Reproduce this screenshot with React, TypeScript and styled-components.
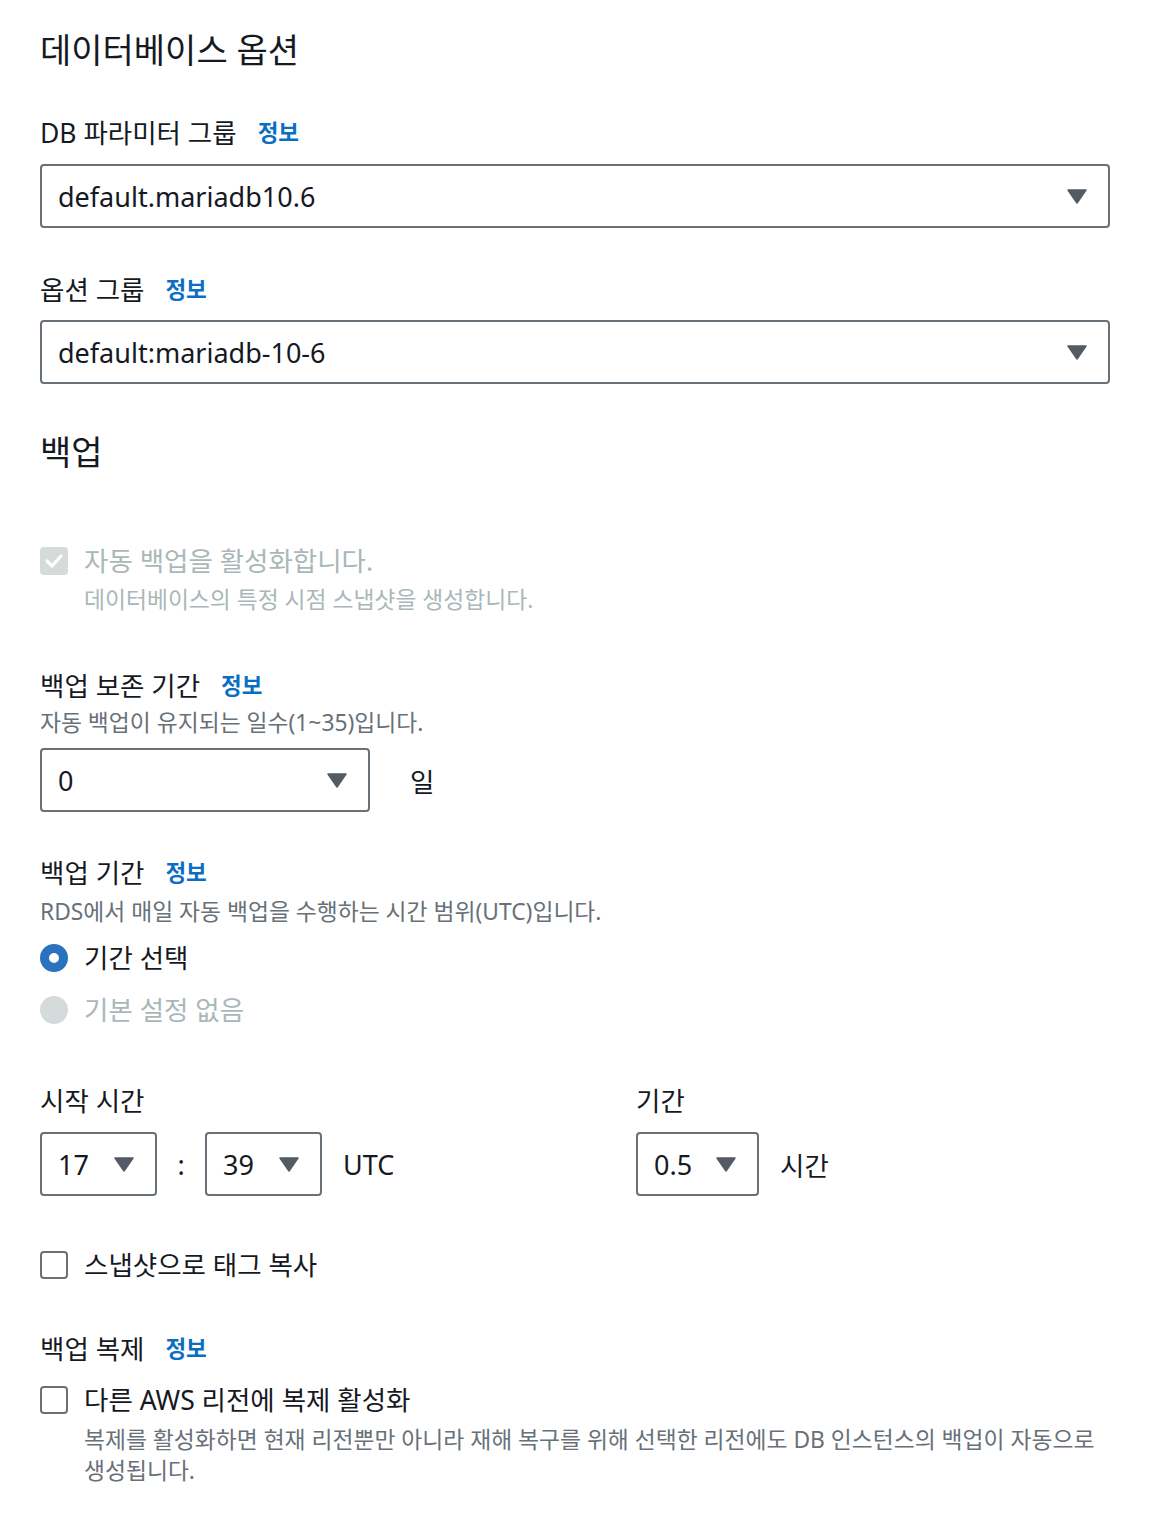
import React from "react";
import styled, { createGlobalStyle } from "styled-components";

const Global = createGlobalStyle`
  html, body { margin: 0; padding: 0; background: #ffffff; }
  body { font-family: "Noto Sans", "Noto Sans CJK KR", sans-serif; color: #16191f; }
`;

const Page = styled.div`
  width: 1070px;
  padding: 30px 0 40px 40px;
`;

const Heading = styled.h2<{ $mt?: number }>`
  margin: ${(p) => p.$mt ?? 0}px 0 0 0;
  font-size: 34px;
  line-height: 40px;
  font-weight: 400;
  color: #16191f;
`;

const Label = styled.div<{ $mt: number }>`
  margin-top: ${(p) => p.$mt}px;
  display: flex;
  align-items: center;
  gap: 21px;
  font-size: 26.5px;
  line-height: 32px;
  color: #16191f;
`;

const Info = styled.span`
  color: #0a6fc2;
  font-weight: 700;
  font-size: 22.5px;
`;

const Desc = styled.div<{ $mt: number; $indent?: boolean; $disabled?: boolean }>`
  margin-top: ${(p) => p.$mt}px;
  padding-left: ${(p) => (p.$indent ? 44 : 0)}px;
  font-size: 22.8px;
  line-height: 31px;
  color: ${(p) => (p.$disabled ? "#aab7b8" : "#687078")};
`;

const SelectBox = styled.div<{ $w?: number; $mt?: number }>`
  margin-top: ${(p) => p.$mt ?? 0}px;
  box-sizing: border-box;
  width: ${(p) => (p.$w ? `${p.$w}px` : "100%")};
  height: 64px;
  border: 2px solid #687078;
  border-radius: 4px;
  display: flex;
  align-items: center;
  justify-content: space-between;
  padding: 0 21px 0 16px;
  font-size: 27px;
  color: #16191f;
  flex-shrink: 0;
`;

const Caret = () => (
  <svg width="20" height="15" viewBox="0 0 20 15">
    <path d="M1 1 H19 L10 14 Z" fill="#545b64" stroke="#545b64" strokeWidth="1.5" strokeLinejoin="round" />
  </svg>
);

const Select = ({ value, w, mt }: { value: string; w?: number; mt?: number }) => (
  <SelectBox $w={w} $mt={mt}>
    <span>{value}</span>
    <Caret />
  </SelectBox>
);

const InlineRow = styled.div<{ $mt?: number }>`
  margin-top: ${(p) => p.$mt ?? 0}px;
  display: flex;
  align-items: center;
`;

const Unit = styled.span<{ $ml: number; $latin?: boolean }>`
  margin-left: ${(p) => p.$ml}px;
  font-size: ${(p) => (p.$latin ? 27 : 26.5)}px;
  color: #16191f;
`;

const Colon = styled.span`
  width: 48px;
  text-align: center;
  font-size: 27px;
`;

const ChoiceRow = styled.div<{ $mt: number; $disabled?: boolean }>`
  margin-top: ${(p) => p.$mt}px;
  display: flex;
  align-items: center;
  gap: 16px;
  font-size: 26.5px;
  line-height: 32px;
  color: ${(p) => (p.$disabled ? "#aab7b8" : "#16191f")};
`;

const Box = styled.span<{ $disabled?: boolean }>`
  box-sizing: border-box;
  width: 28px;
  height: 28px;
  border-radius: 4px;
  flex-shrink: 0;
  display: flex;
  align-items: center;
  justify-content: center;
  border: ${(p) => (p.$disabled ? "none" : "2px solid #687078")};
  background: ${(p) => (p.$disabled ? "#d5dbdb" : "#ffffff")};
`;

const Radio = styled.span<{ $checked?: boolean }>`
  box-sizing: border-box;
  width: 28px;
  height: 28px;
  border-radius: 50%;
  flex-shrink: 0;
  background: ${(p) => (p.$checked ? "#ffffff" : "#d5dbdb")};
  border: ${(p) => (p.$checked ? "9px solid #2a72bd" : "none")};
`;

const Grid = styled.div`
  margin-top: 59px;
  display: grid;
  grid-template-columns: 596px 1fr;
`;

const Col = styled.div``;

const Check = () => (
  <svg width="20" height="16" viewBox="0 0 20 16">
    <path d="M3 8 L8 13 L17 3" fill="none" stroke="#ffffff" strokeWidth="3.2" strokeLinecap="round" strokeLinejoin="round" />
  </svg>
);

export default function App() {
  return (
    <Page>
      <Global />
      <Heading>데이터베이스 옵션</Heading>

      <Label $mt={47}>
        DB 파라미터 그룹 <Info>정보</Info>
      </Label>
      <Select value="default.mariadb10.6" mt={15} />

      <Label $mt={46}>
        옵션 그룹 <Info>정보</Info>
      </Label>
      <Select value="default:mariadb-10-6" mt={14} />

      <Heading $mt={48}>백업</Heading>

      <ChoiceRow $mt={73} $disabled>
        <Box $disabled>
          <Check />
        </Box>
        자동 백업을 활성화합니다.
      </ChoiceRow>
      <Desc $mt={7} $indent $disabled>
        데이터베이스의 특정 시점 스냅샷을 생성합니다.
      </Desc>

      <Label $mt={55}>
        백업 보존 기간 <Info>정보</Info>
      </Label>
      <Desc $mt={5}>자동 백업이 유지되는 일수(1~35)입니다.</Desc>
      <InlineRow $mt={10}>
        <Select value="0" w={330} />
        <Unit $ml={40}>일</Unit>
      </InlineRow>

      <Label $mt={45}>
        백업 기간 <Info>정보</Info>
      </Label>
      <Desc $mt={7}>RDS에서 매일 자동 백업을 수행하는 시간 범위(UTC)입니다.</Desc>
      <ChoiceRow $mt={15}>
        <Radio $checked />
        기간 선택
      </ChoiceRow>
      <ChoiceRow $mt={20} $disabled>
        <Radio />
        기본 설정 없음
      </ChoiceRow>

      <Grid>
        <Col>
          <Label $mt={0}>시작 시간</Label>
          <InlineRow $mt={15}>
            <Select value="17" w={117} />
            <Colon>:</Colon>
            <Select value="39" w={117} />
            <Unit $ml={21} $latin>UTC</Unit>
          </InlineRow>
        </Col>
        <Col>
          <Label $mt={0}>기간</Label>
          <InlineRow $mt={15}>
            <Select value="0.5" w={123} />
            <Unit $ml={21}>시간</Unit>
          </InlineRow>
        </Col>
      </Grid>

      <ChoiceRow $mt={53}>
        <Box />
        스냅샷으로 태그 복사
      </ChoiceRow>

      <Label $mt={52}>
        백업 복제 <Info>정보</Info>
      </Label>
      <ChoiceRow $mt={19}>
        <Box />
        다른 AWS 리전에 복제 활성화
      </ChoiceRow>
      <Desc $mt={8} $indent>
        복제를 활성화하면 현재 리전뿐만 아니라 재해 복구를 위해 선택한 리전에도 DB 인스턴스의 백업이 자동으로 생성됩니다.
      </Desc>
    </Page>
  );
}
